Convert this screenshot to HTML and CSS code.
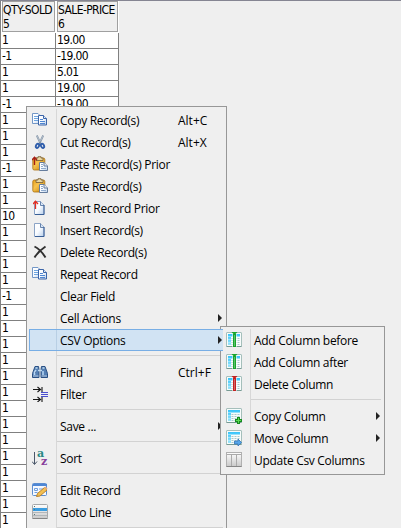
FILE: index.html
```html
<!DOCTYPE html>
<html lang="en">
<head>
<meta charset="utf-8">
<title>CSV Editor</title>
<link rel="stylesheet" href="styles.css">
</head>
<body>
<svg class="defs" width="0" height="0">
  <defs>
    <linearGradient id="paper" x2="1" y2="1"><stop stop-color="#fff"/><stop offset=".5" stop-color="#f8fbff"/><stop offset="1" stop-color="#b5cdea"/></linearGradient>
    <linearGradient id="gold" x2="1" y2="1"><stop stop-color="#e7a11c"/><stop offset=".4" stop-color="#f7c34e"/><stop offset="1" stop-color="#bd7b08"/></linearGradient>
    <linearGradient id="silver" x2="0" y2="1"><stop stop-color="#fff"/><stop offset="1" stop-color="#c9c9c9"/></linearGradient>
    <linearGradient id="cyan" x2="0" y2="1"><stop stop-color="#36c4fb"/><stop offset="1" stop-color="#9be4fb"/></linearGradient>
    <symbol id="copy" viewBox="0 0 16 16">
      <path d="M.5 1.500h5.500l3 3v7h-8.500z" fill="url(#paper)" stroke="#7397c7"/><path d="M2 4.500h4M2 6.500h4M2 8.500h4" stroke="#6fa5df"/>
      <path d="M6.500 3.500h5l3 3v6.500h-8z" fill="url(#paper)" stroke="#3c65a8"/><path d="M11.500 3.500v3h3" fill="#dce9fa" stroke="#3c65a8"/><path d="M8 7.500h3M8 9.500h5M8 11.500h5" stroke="#4f86d2"/>
    </symbol>
    <symbol id="cut" viewBox="0 0 16 16">
      <path d="M4.800 1.500l4 8.500M11.200 1.500L7.200 10" stroke="#8293a6" stroke-width="1.800"/><path d="M5 2l3 6M11 2L8.500 7" stroke="#d5dee6" stroke-width=".6"/>
      <g fill="none" stroke="#315fac" stroke-width="1.900"><ellipse cx="5.500" cy="11.800" rx="1.500" ry="2.200" transform="rotate(25 5.500 11.800)"/><ellipse cx="10.500" cy="11.800" rx="1.500" ry="2.200" transform="rotate(-25 10.500 11.800)"/></g>
    </symbol>
    <symbol id="paste" viewBox="0 0 16 16">
      <rect x=".8" y="2" width="12" height="12" rx="1.500" fill="url(#gold)" stroke="#aa7010" stroke-width=".8"/>
      <path d="M4 4.500V2h2V.7h3V2h2v2.500z" fill="#e8d6a0" stroke="#735b32" stroke-width=".8"/>
      <path d="M7.500 6.500h4.500l3.500 3.500v4.500h-8z" fill="url(#paper)" stroke="#667d9d"/><path d="M12 6.500v3.500h3.500" fill="#e4edf8" stroke="#667d9d"/><path d="M9 8.500h2M9 10.500h2M9 12.500h5" stroke="#8eaacd"/>
    </symbol>
    <symbol id="up" viewBox="0 0 8 10"><path d="M2.500 9V1.500M0 4l2.500-2.700L5 4" fill="none" stroke="currentColor" stroke-width="1.300"/></symbol>
    <symbol id="page" viewBox="0 0 16 16"><path d="M2.500 1.500h6l3.500 3.500v9.500h-9.500z" fill="url(#paper)" stroke="#8aa3c6"/><path d="M8.500 1.500v4h3.500" fill="#d8e6f6" stroke="#6884ac"/><path d="M3 14.500h9v-9.500" fill="none" stroke="#385e96"/></symbol>
    <symbol id="x" viewBox="0 0 16 16"><path d="M2.500 2.500c4 2 8 6 11 11M13.500 2.500c-3 2-8 6-11 11" fill="none" stroke="#303030" stroke-width="1.900"/></symbol>
    <symbol id="find" viewBox="0 0 16 16">
      <path d="M3 2.500h3.500l.5 3v8h-6.500v-4zM13 2.500H9.500l-.5 3v8h6.500v-4z" fill="#5680b4" stroke="#294f83"/>
      <path d="M3.500 4h2M10.500 4h2M6 6.500h4" stroke="#bdd9ef" stroke-width="1.300"/><path d="M2.500 11V8l1.500-2M11 11V7" stroke="#b8d7f5" stroke-width="1.500"/><path d="M1 12h5.500M9.500 12h5.500" stroke="#b2c6dd"/>
    </symbol>
    <symbol id="filter" viewBox="0 0 16 16"><path d="M1 3.500h7M1 13.500h7M5.500 1l3 2.500-3 2.500M5.500 11l3 2.500-3 2.500M10 1v5M10 11v5" fill="none" stroke="#171717" stroke-width="1.100"/><path d="M9 6.500h7M9 8.500h7M9 10.500h7" stroke="#4a4ed0" stroke-width="1.200"/></symbol>
    <symbol id="sort" viewBox="0 0 16 16"><path d="M2.500 2v12M0 11.500l2.500 3 2.500-3" fill="none" stroke="#4a5769"/><text x="5" y="7" class="letter" fill="#268783">a</text><text x="9" y="15" class="letter" fill="#88409b">z</text></symbol>
    <symbol id="edit" viewBox="0 0 16 16"><rect x=".5" y="1.500" width="14" height="12" rx="1" fill="#f5f9ff" stroke="#5d8ed1"/><path d="M1 3h14" stroke="#4f87d5" stroke-width="2"/><path d="M2.500 6.500h3v2h-3zM2.500 10.500h3M7 7h4" fill="none" stroke="#719edc"/><path d="M4.500 14.500l1-3 7-6 2.500 2.500-7 6z" fill="#f3c052" stroke="#b9822e"/><path d="M12 5.500l1.500-1 2 2-1 1.500z" fill="#e9ac82"/></symbol>
    <symbol id="goto" viewBox="0 0 16 16"><rect x=".5" y=".5" width="15" height="14" rx="1" fill="url(#silver)" stroke="#a6a9ab"/><path d="M1 5.500h14" stroke="#3a9de0" stroke-width="3"/><path d="M1 8.500h14M1 11.500h14" stroke="#b3b7ba"/><path d="M2 2.500h1M2 5.500h1M2 10.500h1" stroke="#577"/><path d="M.5 14.500h15" stroke="#858585"/></symbol>
    <symbol id="grid" viewBox="0 0 16 16"><rect x=".5" y=".5" width="15" height="14" rx=".5" fill="#f7fcfb" stroke="#a5bfbb"/><path d="M2 2h12v3H5v8H2z" fill="url(#cyan)"/><path d="M5.500 6.500h8.500M5.500 8.500h8.500M5.500 10.500h8.500M5.500 12.500h8.500" stroke="#a8c9cc" stroke-dasharray="2 1"/><path d="M2 4.500h12M2 7.500h3M2 10.500h3" stroke="#c9f0fb" stroke-width=".6"/><path d="M.5 14.500h15" stroke="#779b94"/></symbol>
    <symbol id="bar" viewBox="0 0 16 16"><path d="M5.500 0h6L9.500 2h-2z" fill="currentColor"/><rect x="6" y="2" width="5" height="13" fill="#fff" fill-opacity=".5"/><rect x="7" y="2" width="3" height="13" fill="currentColor"/><path d="M8.500 3v11" stroke="#fff" stroke-opacity=".3"/></symbol>
    <symbol id="columns" viewBox="0 0 16 16"><rect x=".5" y=".5" width="15" height="14" fill="url(#silver)" stroke="#b0b0b0"/><path d="M1 2.500h14M5.500 3v11M10.500 3v11" stroke="#aaa"/><path d="M.5 14.500h15" stroke="#868686"/></symbol>
  </defs>
</svg>
<main class="editor">
  <div class="table">
    <div class="head"><div>QTY-SOLD<br>5</div><div>SALE-PRICE<br>6</div></div>
    <div class="row"><span>1</span><span>19.00</span></div>
    <div class="row"><span>-1</span><span>-19.00</span></div>
    <div class="row"><span>1</span><span>5.01</span></div>
    <div class="row"><span>1</span><span>19.00</span></div>
    <div class="row"><span>-1</span><span>-19.00</span></div>
    <div class="row"><span>1</span><span></span></div>
    <div class="row"><span>1</span><span></span></div>
    <div class="row"><span>1</span><span></span></div>
    <div class="row"><span>-1</span><span></span></div>
    <div class="row"><span>1</span><span></span></div>
    <div class="row"><span>1</span><span></span></div>
    <div class="row"><span>10</span><span></span></div>
    <div class="row"><span>1</span><span></span></div>
    <div class="row"><span>1</span><span></span></div>
    <div class="row"><span>1</span><span></span></div>
    <div class="row"><span>1</span><span></span></div>
    <div class="row"><span>-1</span><span></span></div>
    <div class="row"><span>1</span><span></span></div>
    <div class="row"><span>1</span><span></span></div>
    <div class="row"><span>1</span><span></span></div>
    <div class="row"><span>1</span><span></span></div>
    <div class="row"><span>1</span><span></span></div>
    <div class="row"><span>1</span><span></span></div>
    <div class="row"><span>1</span><span></span></div>
    <div class="row"><span>1</span><span></span></div>
    <div class="row"><span>1</span><span></span></div>
    <div class="row"><span>1</span><span></span></div>
    <div class="row"><span>1</span><span></span></div>
    <div class="row"><span>1</span><span></span></div>
    <div class="row"><span>1</span><span></span></div>
    <div class="row"><span>1</span><span></span></div>
  </div>

  <div class="menu context">
    <div class="item"><svg class="icon"><use href="#copy"/></svg><span>Copy Record(s)</span><kbd>Alt+C</kbd></div>
    <div class="item"><svg class="icon"><use href="#cut"/></svg><span>Cut Record(s)</span><kbd>Alt+X</kbd></div>
    <div class="item"><svg class="icon"><use href="#paste"/><use href="#up" class="dark" width="8" height="10"/></svg><span>Paste Record(s) Prior</span></div>
    <div class="item"><svg class="icon"><use href="#paste"/></svg><span>Paste Record(s)</span></div>
    <div class="item"><svg class="icon"><use href="#page"/><use href="#up" class="bright" x="1" width="8" height="10"/></svg><span>Insert Record Prior</span></div>
    <div class="item"><svg class="icon"><use href="#page"/></svg><span>Insert Record(s)</span></div>
    <div class="item"><svg class="icon"><use href="#x"/></svg><span>Delete Record(s)</span></div>
    <div class="item"><svg class="icon"><use href="#copy"/></svg><span>Repeat Record</span></div>
    <div class="item"><i class="icon"></i><span>Clear Field</span></div>
    <div class="item"><i class="icon"></i><span>Cell Actions</span><b class="arrow"></b></div>
    <div class="item selected"><i class="icon"></i><span>CSV Options</span><b class="arrow"></b></div>
    <div class="separator"></div>
    <div class="item"><svg class="icon"><use href="#find"/></svg><span>Find</span><kbd>Ctrl+F</kbd></div>
    <div class="item"><svg class="icon"><use href="#filter"/></svg><span>Filter</span></div>
    <div class="separator"></div>
    <div class="item"><i class="icon"></i><span>Save ...</span><b class="arrow"></b></div>
    <div class="separator"></div>
    <div class="item"><svg class="icon"><use href="#sort"/></svg><span>Sort</span></div>
    <div class="separator"></div>
    <div class="item"><svg class="icon"><use href="#edit"/></svg><span>Edit Record</span></div>
    <div class="item"><svg class="icon"><use href="#goto"/></svg><span>Goto Line</span></div>
    <div class="separator"></div>
  </div>

  <div class="menu submenu">
    <div class="item"><svg class="icon"><use href="#grid"/><use href="#bar" class="green"/></svg><span>Add Column before</span></div>
    <div class="item"><svg class="icon"><use href="#grid"/><use href="#bar" class="green"/></svg><span>Add Column after</span></div>
    <div class="item"><svg class="icon"><use href="#grid"/><use href="#bar" class="red"/></svg><span>Delete Column</span></div>
    <div class="separator"></div>
    <div class="item"><svg class="icon"><use href="#grid"/><path d="M12.500 9v7M9 12.500h7" stroke="#168b20" stroke-width="3"/><path d="M12.500 10v5M10 12.500h5" stroke="#5cda54"/></svg><span>Copy Column</span><b class="arrow"></b></div>
    <div class="item"><svg class="icon"><use href="#grid"/><path d="M8.500 11h3.500V9l3.500 3.500L12 16v-2H8.500z" fill="#56a5e9" stroke="#3474b5" stroke-width=".8"/></svg><span>Move Column</span><b class="arrow"></b></div>
    <div class="item"><svg class="icon"><use href="#columns"/></svg><span>Update Csv Columns</span></div>
  </div>
</main>
</body>
</html>
```
FILE: styles.css
```css
* { box-sizing: border-box; }
body { margin: 0; background: #efefef; overflow: hidden; }
.defs { position: absolute; }
.editor { position: relative; width: 401px; height: 528px; overflow: hidden; border-top: 1px solid #858592; color: #000; }
.table { width: 119px; background: #fff; border-left: 1px solid #808080; font: 12px/14px "DejaVu Sans Condensed", "DejaVu Sans", sans-serif; font-stretch: condensed; letter-spacing: -.65px; }
.head { display: grid; grid-template-columns: 53px 61px; gap: 2px; height: 32px; padding: 0 0 1px 1px; }
.head div { padding: 1px 0 0 0; background: #efefef; border: 1px solid #a0a0a0; white-space: nowrap; line-height: 14px; letter-spacing: -.6px; }
.row { display: grid; grid-template-columns: 55px 63px; height: 16px; }
.row span { border-right: 1px solid #808080; border-bottom: 1px solid #808080; padding-left: 1px; line-height: 15px; }
.menu { position: absolute; padding: 2px 3px 2px 2px; background: #efefef; border: 1px solid #979797; font: 12px/22px "Open Sans", "Noto Sans", sans-serif; }
.menu::before { content: ""; position: absolute; left: 29px; top: 2px; bottom: 2px; width: 1px; background: #d7d7d7; }
.context { left: 26px; top: 105px; width: 201px; height: 440px; }
.submenu { left: 220px; top: 325px; width: 165px; height: 149px; }
.item { position: relative; display: grid; grid-template-columns: 16px 1fr auto; grid-template-rows: 100%; column-gap: 12px; align-items: center; height: 22px; padding: 0 1px 0 3px; white-space: nowrap; }
.item span, .item kbd { font: inherit; padding-top: 2px; line-height: 20px; }
.item span { letter-spacing: -.3px; }
.item kbd { width: 44px; }
.icon { display: block; width: 16px; height: 16px; }
.selected { z-index: 1; background: #d1e3f3; border: 1px solid #78aee5; border-right: 0; padding-left: 2px; padding-right: 1px; }
.selected span { padding-top: 1px; line-height: 19px; }
.selected::before { content: ""; position: absolute; left: 26px; top: 0; bottom: 0; width: 1px; background: #b8cfe4; }
.arrow { width: 0; height: 0; border: 4px solid transparent; border-left-color: #222; border-right: 0; }
.separator { height: 10px; padding: 4px 0 0 28px; }
.separator::before { content: ""; display: block; height: 1px; background: #d2d2d2; }
.letter { font: bold 11px "DejaVu Serif", serif; }
.dark { color: #a51d17; }
.bright { color: #e52e20; }
.green { color: #16a52c; }
.red { color: #c32121; }
```
